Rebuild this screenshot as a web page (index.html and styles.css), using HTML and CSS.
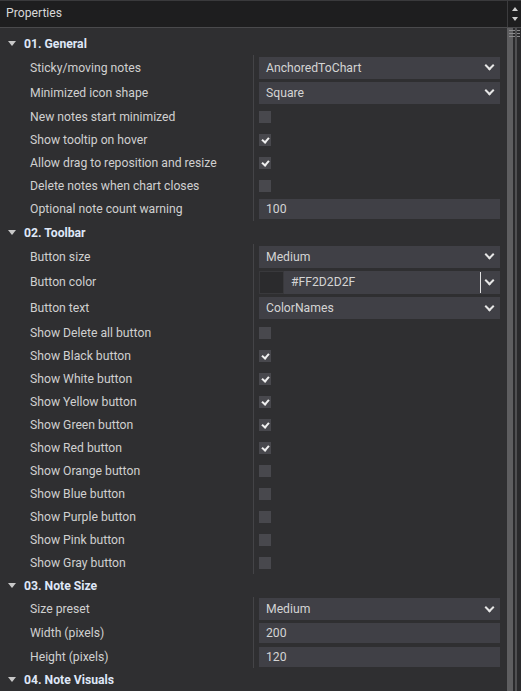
FILE: index.html
```html
<!DOCTYPE html>
<html lang="en">
<head>
  <meta charset="UTF-8" />
  <title>Properties</title>
  <link rel="stylesheet" href="styles.css">
</head>
<body>
  <div class="panel">
    <div class="titlebar">
      <span class="title">Properties</span>
      <div class="spin">
        <span class="up"></span>
        <span class="down"></span>
      </div>
    </div>

    <div class="body">
      <div class="grid">
        <div class="cat"><span class="tri"></span>01. General</div>
        <div class="rows">
          <div class="row tall"><span class="label">Sticky/moving notes</span><div class="val"><div class="combo">AnchoredToChart<span class="chev"></span></div></div></div>
          <div class="row tall"><span class="label">Minimized icon shape</span><div class="val"><div class="combo">Square<span class="chev"></span></div></div></div>
          <div class="row"><span class="label">New notes start minimized</span><div class="val"><span class="check"></span></div></div>
          <div class="row"><span class="label">Show tooltip on hover</span><div class="val"><span class="check on"></span></div></div>
          <div class="row"><span class="label">Allow drag to reposition and resize</span><div class="val"><span class="check on"></span></div></div>
          <div class="row"><span class="label">Delete notes when chart closes</span><div class="val"><span class="check"></span></div></div>
          <div class="row mid"><span class="label">Optional note count warning</span><div class="val"><div class="input">100</div></div></div>
        </div>

        <div class="cat"><span class="tri"></span>02. Toolbar</div>
        <div class="rows">
          <div class="row tall"><span class="label">Button size</span><div class="val"><div class="combo">Medium<span class="chev"></span></div></div></div>
          <div class="row big"><span class="label">Button color</span><div class="val"><div class="color"><span class="swatch"></span><span class="hex">#FF2D2D2F</span><span class="caret"></span><span class="chev"></span></div></div></div>
          <div class="row big"><span class="label">Button text</span><div class="val"><div class="combo">ColorNames<span class="chev"></span></div></div></div>
          <div class="row"><span class="label">Show Delete all button</span><div class="val"><span class="check"></span></div></div>
          <div class="row"><span class="label">Show Black button</span><div class="val"><span class="check on"></span></div></div>
          <div class="row"><span class="label">Show White button</span><div class="val"><span class="check on"></span></div></div>
          <div class="row"><span class="label">Show Yellow button</span><div class="val"><span class="check on"></span></div></div>
          <div class="row"><span class="label">Show Green button</span><div class="val"><span class="check on"></span></div></div>
          <div class="row"><span class="label">Show Red button</span><div class="val"><span class="check on"></span></div></div>
          <div class="row"><span class="label">Show Orange button</span><div class="val"><span class="check"></span></div></div>
          <div class="row"><span class="label">Show Blue button</span><div class="val"><span class="check"></span></div></div>
          <div class="row"><span class="label">Show Purple button</span><div class="val"><span class="check"></span></div></div>
          <div class="row"><span class="label">Show Pink button</span><div class="val"><span class="check"></span></div></div>
          <div class="row"><span class="label">Show Gray button</span><div class="val"><span class="check"></span></div></div>
        </div>

        <div class="cat"><span class="tri"></span>03. Note Size</div>
        <div class="rows">
          <div class="row mid"><span class="label">Size preset</span><div class="val"><div class="combo">Medium<span class="chev"></span></div></div></div>
          <div class="row mid"><span class="label">Width (pixels)</span><div class="val"><div class="input">200</div></div></div>
          <div class="row"><span class="label">Height (pixels)</span><div class="val"><div class="input">120</div></div></div>
        </div>

        <div class="cat"><span class="tri"></span>04. Note Visuals</div>
      </div>

      <div class="scrollbar">
        <div class="thumb">
          <span class="grip"></span>
          <span class="grip"></span>
          <span class="grip"></span>
        </div>
        <div class="rail"></div>
      </div>
    </div>
  </div>
</body>
</html>
```

FILE: styles.css
```css
* {
  box-sizing: border-box;
}

body {
  margin: 0;
  background: #2f2f31;
  font-family: 'Roboto', 'Noto Sans', sans-serif;
  font-size: 12.2px;
  color: #d0d0d0;
  overflow: hidden;
}

.panel {
  width: 521px;
  height: 691px;
  display: flex;
  flex-direction: column;
  overflow: hidden;
}

.titlebar {
  height: 28px;
  flex: none;
  display: flex;
  background: #1e1e1f;
  border-top: 1px solid #3a3a3c;
  border-bottom: 1px solid #4a4a4c;
}

.title {
  flex: 1;
  padding: 5px 0 0 6px;
  color: #d8d8d8;
}

.spin {
  width: 14px;
  border-left: 1px solid #3c3c3e;
  display: flex;
  flex-direction: column;
  align-items: center;
  justify-content: center;
  gap: 6px;
}

.up, .down {
  width: 0;
  height: 0;
  border-left: 3px solid transparent;
  border-right: 3px solid transparent;
}

.up {
  border-bottom: 4px solid #cfcfcf;
}

.down {
  border-top: 4px solid #cfcfcf;
}

.body {
  flex: 1;
  display: flex;
  min-height: 0;
}

.grid {
  flex: 1;
  padding-top: 4px;
}

.cat {
  height: 23px;
  display: flex;
  align-items: center;
  gap: 8px;
  padding-left: 8px;
  font-weight: 700;
  color: #dfe7f7;
}

.tri {
  width: 0;
  height: 0;
  border-left: 4px solid transparent;
  border-right: 4px solid transparent;
  border-top: 5px solid #c8c8c8;
}

.row {
  height: 23px;
  display: flex;
}

.row.tall {
  height: 25px;
}

.row.mid {
  height: 24px;
}

.row.big {
  height: 26px;
}

.label {
  width: 253px;
  flex: none;
  padding-left: 30px;
  display: flex;
  align-items: center;
}

.val {
  flex: 1;
  display: flex;
  align-items: center;
  border-left: 1px solid #444447;
  padding: 0 7px 0 5px;
}

.combo, .input, .color {
  width: 100%;
  display: flex;
  align-items: center;
  background: #404046;
  color: #d4d4d4;
  padding-left: 7px;
}

.combo {
  height: 22px;
  justify-content: space-between;
  padding-right: 5px;
}

.input {
  height: 20px;
}

.color {
  height: 23px;
  padding-left: 0;
  padding-right: 5px;
}

.swatch {
  width: 25px;
  height: 23px;
  background: #2b2b2d;
  border: 1px solid #39393c;
}

.hex {
  flex: 1;
  padding-left: 7px;
}

.caret {
  width: 1px;
  height: 21px;
  background: #e0e0e0;
  margin-right: 5px;
}

.chev {
  width: 7px;
  height: 7px;
  border-right: 2px solid #e6e6e6;
  border-bottom: 2px solid #e6e6e6;
  transform: translateY(-2px) rotate(45deg);
  margin-right: 2px;
}

.check {
  width: 12px;
  height: 12px;
  background: #48484d;
  position: relative;
}

.check.on::after {
  content: "";
  position: absolute;
  left: 4px;
  top: 2px;
  width: 3px;
  height: 5px;
  border-right: 2px solid #f0f0f0;
  border-bottom: 2px solid #f0f0f0;
  transform: rotate(40deg);
}

.scrollbar {
  width: 14px;
  flex: none;
  display: flex;
  background: #2a2a2c;
}

.thumb {
  width: 6px;
  background: #5e5e60;
  display: flex;
  flex-direction: column;
  align-items: flex-start;
  gap: 2px;
  padding-top: 2px;
}

.grip {
  width: 11px;
  height: 1px;
  background: #8a8a8c;
  margin-left: 2px;
}

.rail {
  width: 2px;
  margin-left: 2px;
  background: #505052;
}
```
